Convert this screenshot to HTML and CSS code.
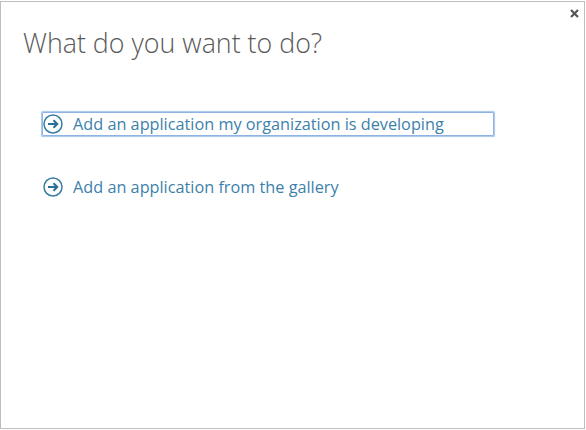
FILE: index.html
```html
<!DOCTYPE html>
<html lang="en">
<head>
<meta charset="utf-8">
<title>What do you want to do?</title>
<link rel="stylesheet" href="styles.css">
</head>
<body>
<div class="dialog">
  <button class="close" aria-label="Close">
    <svg width="9" height="9" viewBox="0 0 9 9"><path d="M1 1L8 8M8 1L1 8" stroke="#555" stroke-width="2.2"/></svg>
  </button>
  <h1 class="title">What do you want to do?</h1>
  <ul class="options">
    <li><a class="option focused">
      <svg class="arrow" width="20" height="20" viewBox="0 0 20 20"><circle cx="10" cy="10" r="9" fill="none" stroke="#3b7ca3" stroke-width="1.5"/><path d="M5 10H14M10.5 6.2L14.3 10L10.5 13.8" fill="none" stroke="#2a6f98" stroke-width="2"/></svg>
      <span>Add an application my organization is developing</span></a></li>
    <li><a class="option">
      <svg class="arrow" width="20" height="20" viewBox="0 0 20 20"><circle cx="10" cy="10" r="9" fill="none" stroke="#3b7ca3" stroke-width="1.5"/><path d="M5 10H14M10.5 6.2L14.3 10L10.5 13.8" fill="none" stroke="#2a6f98" stroke-width="2"/></svg>
      <span>Add an application from the gallery</span></a></li>
  </ul>
</div>
</body>
</html>
```
FILE: styles.css
```css
html, body { margin: 0; padding: 0; background: #fff; }
.dialog {
  position: relative;
  box-sizing: border-box;
  width: 585px;
  height: 428px;
  margin-top: 1px;
  border: 1px solid #bdbdbd;
  padding: 22px 22px 0;
  font-family: "Open Sans", "Liberation Sans", sans-serif;
}
.close { position: absolute; top: 7px; right: 5px; padding: 0; border: 0; background: none; line-height: 0; }
.title { margin: 0; font-size: 26.8px; font-weight: 300; line-height: 38px; color: #5a5a5a; }
.options { list-style: none; margin: 50px 0 0 19px; padding: 0; display: flex; flex-direction: column; gap: 39px; }
.option { box-sizing: border-box; display: flex; align-items: center; gap: 10px; width: 452px; height: 24px; color: #3d7fab; font-size: 16.25px; border: 1px solid transparent; border-radius: 1px; }
.option.focused { border-color: #8fb4e3; box-shadow: 0 0 1px 0.5px #a9c6ea; }
.arrow { flex: none; }
```
